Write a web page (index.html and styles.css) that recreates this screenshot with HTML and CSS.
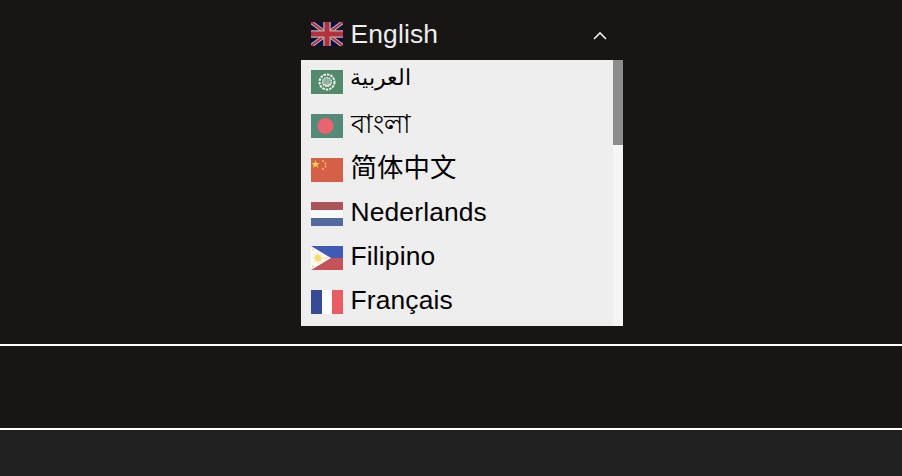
FILE: index.html
```html
<!DOCTYPE html>
<html lang="en">
<head>
    <meta charset="UTF-8">
    <meta name="viewport" content="width=device-width, initial-scale=1.0">
    <title>Language</title>
    <link rel="stylesheet" href="styles.css">
</head>
<body>
    <!-- Language picker, opened -->
    <section class="top">
        <div class="picker">
            <div class="current">
                <svg class="flag" viewBox="0 0 32 24">
                    <rect width="32" height="24" fill="#080d44"/>
                    <path d="M0 0L32 24M32 0L0 24" stroke="#b4b4b4" stroke-width="4"/>
                    <path d="M0 0L32 24M32 0L0 24" stroke="#b5303a" stroke-width="2"/>
                    <path d="M16 0V24M0 12H32" stroke="#b4b4b4" stroke-width="7.5"/>
                    <path d="M16 0V24M0 12H32" stroke="#b5303a" stroke-width="5"/>
                </svg>
                <span class="name current-name">English</span>
                <svg class="chevron" viewBox="0 0 14 9">
                    <path d="M1 8L7 2L13 8" fill="none" stroke="#eee" stroke-width="1.6"/>
                </svg>
            </div>
            <div class="dropdown">
                <ul class="options">
                    <li class="option">
                        <svg class="flag" viewBox="0 0 32 24">
                            <rect width="32" height="24" fill="#548a6c"/>
                            <circle cx="16" cy="12" r="7.5" fill="none" stroke="#f4f4f4" stroke-width="2" stroke-dasharray="2.5 1"/>
                            <circle cx="16" cy="12" r="4.5" fill="#8fb39f" stroke="#f4f4f4" stroke-width="1.2" stroke-dasharray="1.5 1"/>
                            <path d="M12 14Q16 17 20 14" fill="none" stroke="#f4f4f4"/>
                        </svg>
                        <span class="name name-ar" lang="ar">العربية</span>
                    </li>
                    <li class="option">
                        <svg class="flag" viewBox="0 0 32 24">
                            <rect width="32" height="24" fill="#558a78"/>
                            <circle cx="14.5" cy="12" r="8" fill="#ea6470"/>
                        </svg>
                        <span class="name" lang="bn">বাংলা</span>
                    </li>
                    <li class="option">
                        <svg class="flag" viewBox="0 0 32 24">
                            <rect width="32" height="24" fill="#d4604a"/>
                            <polygon points="4.5,2 5.6,4.9 8.8,4.9 6.2,6.9 7.2,10 4.5,8.1 1.8,10 2.8,6.9 0.2,4.9 3.4,4.9" fill="#f0cf50"/>
                            <circle cx="12" cy="3" r="0.9" fill="#f0cf50"/>
                            <circle cx="14.5" cy="5.5" r="0.9" fill="#f0cf50"/>
                            <circle cx="14.5" cy="8.5" r="0.9" fill="#f0cf50"/>
                            <circle cx="12" cy="11" r="0.9" fill="#f0cf50"/>
                        </svg>
                        <span class="name" lang="zh">简体中文</span>
                    </li>
                    <li class="option">
                        <svg class="flag" viewBox="0 0 32 24">
                            <rect width="32" height="8" fill="#ad5459"/>
                            <rect y="8" width="32" height="8" fill="#fbfbfb"/>
                            <rect y="16" width="32" height="8" fill="#526aa0"/>
                        </svg>
                        <span class="name">Nederlands</span>
                    </li>
                    <li class="option">
                        <svg class="flag" viewBox="0 0 32 24">
                            <rect width="32" height="12" fill="#3f5bb5"/>
                            <rect y="12" width="32" height="12" fill="#c5535a"/>
                            <polygon points="0,0 20,12 0,24" fill="#fbfbfb"/>
                            <circle cx="7" cy="12" r="3.2" fill="#f8dc6a"/>
                            <path d="M7 6.5V17.5M1.5 12H12.5M3 8L11 16M11 8L3 16" stroke="#f8dc6a" stroke-width="0.8"/>
                            <circle cx="2" cy="3.5" r="1" fill="#f8dc6a"/>
                            <circle cx="2" cy="20.5" r="1" fill="#f8dc6a"/>
                            <circle cx="14.5" cy="12" r="1" fill="#f8dc6a"/>
                        </svg>
                        <span class="name">Filipino</span>
                    </li>
                    <li class="option">
                        <svg class="flag" viewBox="0 0 32 24">
                            <rect width="11" height="24" fill="#354b94"/>
                            <rect x="11" width="10" height="24" fill="#fbfbfb"/>
                            <rect x="21" width="11" height="24" fill="#e85c64"/>
                        </svg>
                        <span class="name">Français</span>
                    </li>
                </ul>
                <div class="scrollbar"><div class="scrollbar-thumb"></div></div>
            </div>
        </div>
    </section>

    <section class="middle"></section>
    <footer class="bottom"></footer>
</body>
</html>
```

FILE: styles.css
```css
/* General body styles */
body {
    margin: 0;
    background: #171615;
    font-family: "Liberation Sans", "Noto Sans CJK SC", sans-serif;
}

/* Top section with the picker */
.top {
    height: 344px;
    border-bottom: 2px solid #fff;
}

.picker {
    width: 322px;
    margin-left: 301px;
}

.current {
    display: flex;
    align-items: center;
    gap: 7.5px;
    height: 60px;
    padding: 8px 16px 0 10px;
    box-sizing: border-box;
    color: #eee;
}

.current .name {
    flex: 1;
    margin-bottom: 0;
}

.chevron {
    width: 14px;
    height: 9px;
    margin-top: 3px;
}

.flag {
    flex: none;
    width: 32px;
    height: 24px;
}

/* Opened list */
.dropdown {
    display: flex;
    height: 266px;
    background: #eee;
}

.options {
    flex: 1;
    margin: 0;
    padding: 0;
    list-style: none;
}

.option {
    display: flex;
    align-items: center;
    gap: 7.5px;
    height: 44px;
    padding: 0 10px;
    color: #000;
}

.name {
    margin-bottom: 4px;
    font-size: 26.4px;
    line-height: 30px;
    letter-spacing: 0.15px;
}

.name-ar {
    margin-bottom: 8px;
    margin-left: -1px;
    font-size: 21.6px;
    letter-spacing: 0;
}

.scrollbar {
    width: 10px;
    background: #f5f5f5;
}

.scrollbar-thumb {
    height: 85px;
    background: #8c8c8c;
}

/* Strips below the picker */
.middle {
    height: 82px;
    border-bottom: 2px solid #fff;
}

.bottom {
    height: 46px;
    background: #212121;
}
```
